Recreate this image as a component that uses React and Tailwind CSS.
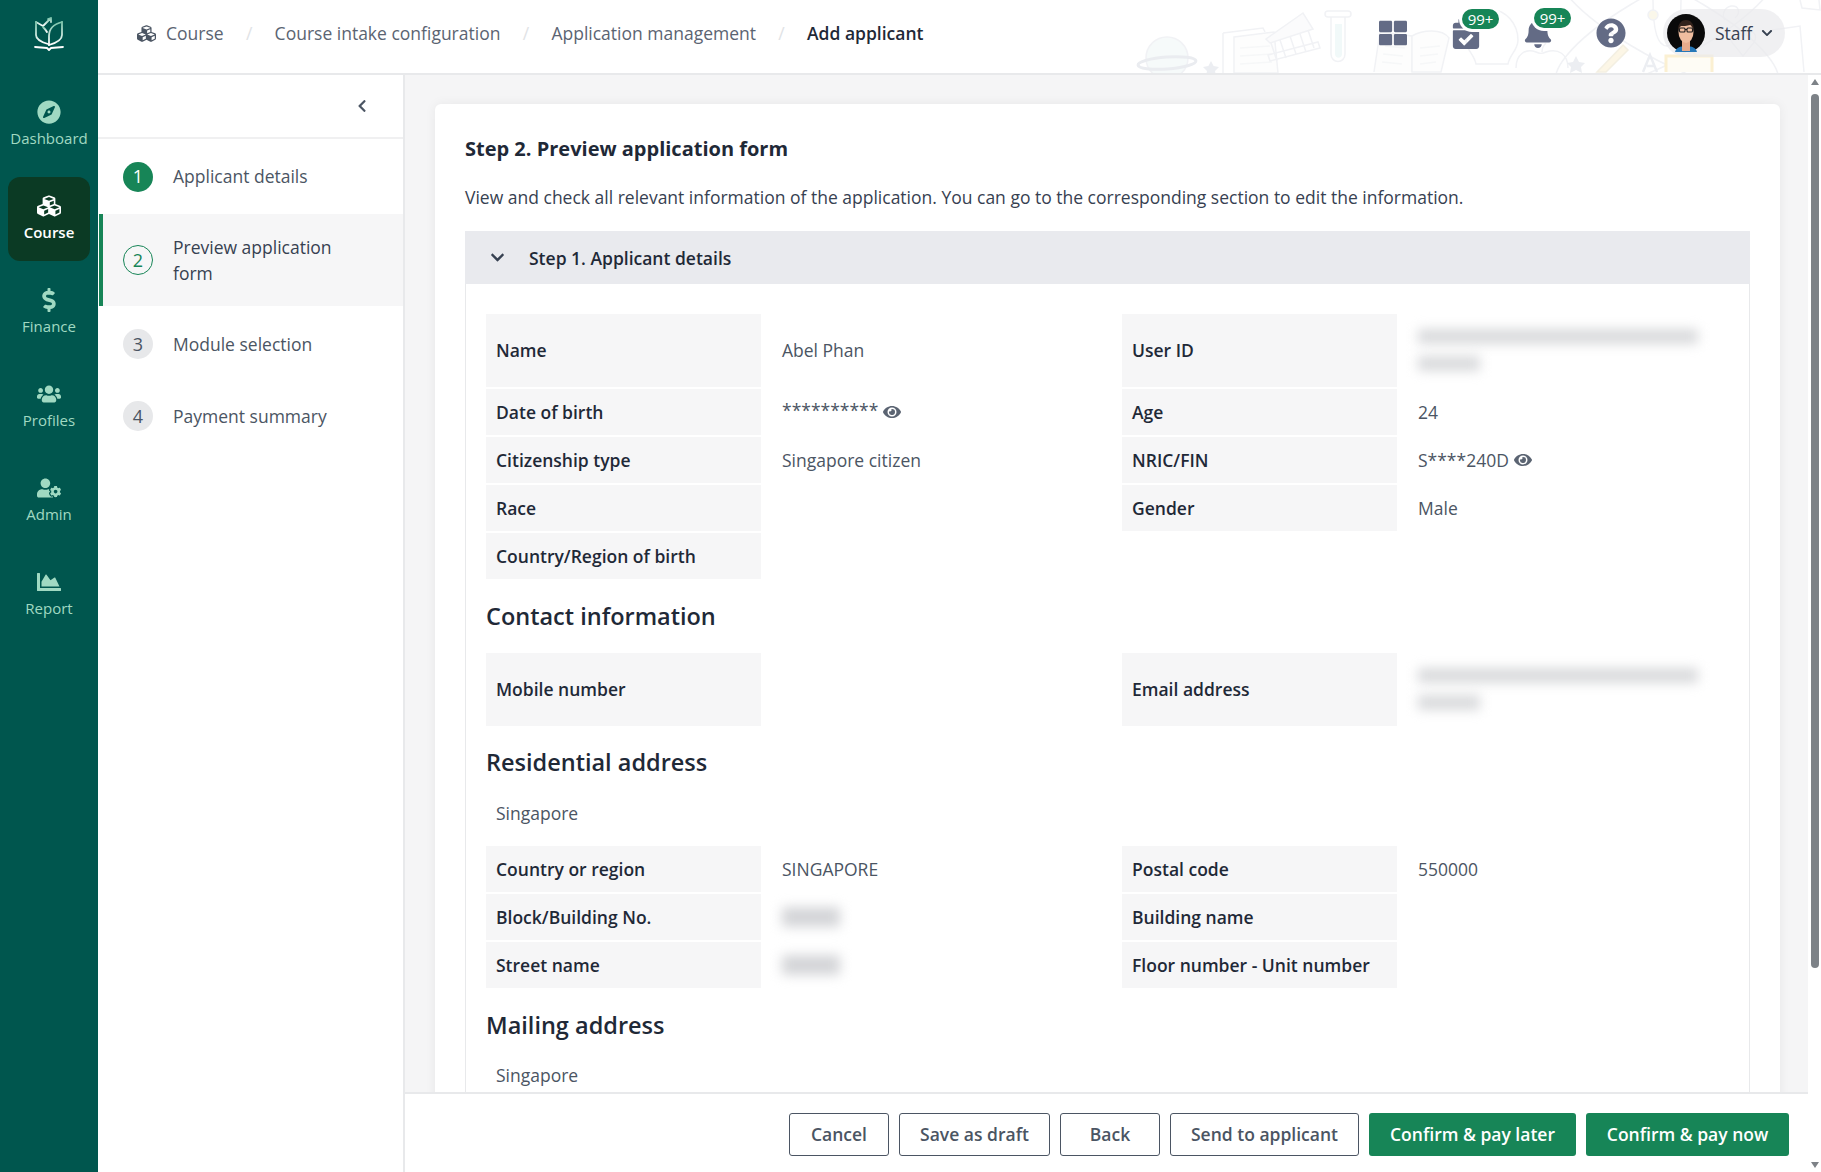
import React from "react";
import {
  FaCompass,
  FaCubes,
  FaDollarSign,
  FaUsers,
  FaUserCog,
  FaChartArea,
  FaThLarge,
  FaCalendarCheck,
  FaBell,
  FaQuestionCircle,
  FaEye,
  FaChevronDown,
  FaChevronLeft,
} from "react-icons/fa";

const navItems = [
  { label: "Dashboard", icon: FaCompass },
  { label: "Course", icon: FaCubes, active: true },
  { label: "Finance", icon: FaDollarSign },
  { label: "Profiles", icon: FaUsers },
  { label: "Admin", icon: FaUserCog },
  { label: "Report", icon: FaChartArea },
];

const Logo = () => (
  <svg width="30" height="36" viewBox="0 0 30 36" fill="none" strokeWidth="1.8" strokeLinejoin="round" strokeLinecap="round">
    <defs>
      <linearGradient id="logoFade" x1="0" y1="0" x2="0" y2="1">
        <stop offset="0" stopColor="#7cc4ab" />
        <stop offset="1" stopColor="#ffffff" />
      </linearGradient>
    </defs>
    <g stroke="url(#logoFade)">
      <path d="M2 7l7 4 8-8-3 1M17 3v4" />
      <path d="M2 7v13c0 4 5 7 12 9" />
      <path d="M28 7c-8 2-13 7-13 14v9" />
      <path d="M28 7v13c0 5-6 8-13 10" />
      <path d="M9 12c2 2 3 3 4 5" />
    </g>
    <path d="M1 32l12 1 2 2 2-2 12-1" stroke="#ffffff" />
  </svg>
);

const Avatar = () => (
  <svg width="38" height="38" viewBox="0 0 38 38">
    <circle cx="19" cy="19" r="19" fill="#0a0a0a" />
    <path d="M8 38c1-4 5-6 11-6s10 2 11 6a19 19 0 0 1-22 0z" fill="#2678b8" />
    <path d="M15 37l0-10h8l0 10z" fill="#e6ab8c" />
    <ellipse cx="19" cy="18" rx="7.500" ry="11" fill="#efbd9f" />
    <path d="M11 16c0-7 4-10 8-10s8 3 8 10c-2-3-3-5-4-5-3 1-7 1-9 1-1 1-2 2-3 4z" fill="#33231c" />
    <rect x="12.500" y="14" width="5.500" height="4" rx="1" fill="none" stroke="#1c1c1c" strokeWidth="1.100" />
    <rect x="20" y="14" width="5.500" height="4" rx="1" fill="none" stroke="#1c1c1c" strokeWidth="1.100" />
    <path d="M18 15.500h2" stroke="#1c1c1c" strokeWidth="1" />
  </svg>
);

// faint school doodles behind the header icons (drawn in page x minus 1100)
const Doodles = () => (
  <svg className="absolute right-0 top-0 pointer-events-none" width="721" height="73" viewBox="0 0 721 73" fill="none" strokeWidth="1.500">
    <g stroke="#f1f2f5">
      <circle cx="67" cy="58" r="21" fill="#f6fafa" />
      <path d="M123 33l40-5 2 4" fill="#fff" />
      <path d="M123 33v40M134 37l40-5 4 41h-44z" fill="#fdfdfd" />
      <path d="M140 48l30-2M140 56l32-2M140 64l32-2" stroke="#f6f7f8" />
      <path d="M203 13l-37 26 4 4 43-14z" fill="#fbfbfc" />
      <path d="M171 43l6 18M180 40l6 18M190 36l6 18M200 34l6 18M208 30l6 18" />
      <path d="M168 55l50-13 2 6-50 13z" />
      <path d="M228 11h20a2 2 0 0 1 0 6h-20a2 2 0 0 1 0-6zM231 17v37c0 10 14 10 14 0v-37" />
      <path d="M235 24h7v30c0 5-7 5-7 0z" fill="#f1f9f9" stroke="none" />
      <path d="M274 72l6-40 32 4v36" fill="#fdfdfd" />
      <path d="M312 36c10-6 30-8 37 2l-8 34h-29z" fill="#fdfdfd" />
      <path d="M320 48l20-2M320 56l18-2M320 64l16-2M285 46l20 2M283 54l20 2M282 62l20 2" stroke="#f6f7f8" />
      <path d="M366 40c0-16 12-30 26-30s26 14 26 30c0 10-8 14-10 24h-32c-2-10-10-14-10-24z" />
      <path d="M416 68c0-14 10-20 20-16 4 2 6 2 10 0 12-4 22 2 22 16" />
      <path d="M442 52c0-4 2-7 4-9" />
      <path d="M530 5a12 42 62 1 0 74 40a12 42 62 1 0-74-40zM604 5a12 42 -62 1 1-74 40a12 42 -62 1 1 74-40z" />
      <path d="M553 0c0 30 4 46 14 46s14-16 14-46" />
      <circle cx="553" cy="15" r="5" fill="#faf7ea" />
      <path d="M625 20c-3-4-2-12 6-14 8-1 10 7 4 12" />
      <path d="M635 46c-8-8-4-16 2-14 4 1 6 5 6 5s2-4 6-5c6-2 10 6 2 14l-8 10z" />
      <path d="M672 30l28-4 4 46M700 0l2 8 18 2-1-10" />
    </g>
    <path d="M111 61l2.600 5 5.400 1-4 4 1 5-5-3-5 3 1-5-4-4 5.400-1z" fill="#eceef2" />
    <ellipse cx="67" cy="63" rx="29" ry="6" stroke="#eaecf0" strokeWidth="3" transform="rotate(-4 67 63)" />
    <path d="M476 56l3 6 6 1-4 4 1 6-6-3-6 3 1-6-4-4 6-1z" fill="#eceef2" />
    <path d="M497 72l26-27 5 5-22 22z" fill="#fcf6e6" stroke="#f3efe2" />
    <path d="M543 72l7-17 7 17M547 66h7" stroke="#eceef2" strokeWidth="2.500" />
    <path d="M566 72v-16h46v16" stroke="#fbf0d2" strokeWidth="3" fill="#fefcf5" />
    <path d="M581 56l8-8 8 8" stroke="#fbf0d2" strokeWidth="2" />
  </svg>
);

const Sidebar = () => (
  <aside className="w-[98px] shrink-0 bg-[#00564e] flex flex-col items-center">
    <div className="h-[83px] pt-[15px] flex justify-center w-full">
      <Logo />
    </div>
    <nav className="flex flex-col gap-[10px] w-full px-2">
      {navItems.map((item) => {
        const Icon = item.icon;
        return (
          <div
            key={item.label}
            className={`h-[84px] rounded-xl flex flex-col items-center pt-[17px] ${
              item.active ? "bg-[#0b3a24] text-white font-semibold" : "text-[#a0d9c2]"
            }`}
          >
            <div className="h-6 flex items-center">
              <Icon className="w-6 h-6" />
            </div>
            <span className="mt-[3px] text-[15px] leading-[22px] whitespace-nowrap">{item.label}</span>
          </div>
        );
      })}
    </nav>
  </aside>
);

const Badge = () => (
  <span className="absolute left-[10px] top-[-10px] h-[20px] w-[37px] rounded-full bg-[#178557] ring-[3px] ring-white text-white text-[15px] leading-[20px] text-center">
    99+
  </span>
);

const Header = () => (
  <header className="relative h-[75px] shrink-0 bg-white border-b-2 border-[#e8e9eb] flex items-center pb-[7px]">
    <Doodles />
    <div className="relative flex items-center pl-[39px] text-[17.500px] text-[#5b6472]">
      <FaCubes className="w-[19px] h-[19px] mr-[10px] text-[#4b5563]" />
      <span>Course</span>
      <span className="w-[51px] text-center text-[#e1e3e6]">/</span>
      <span>Course intake configuration</span>
      <span className="w-[51px] text-center text-[#e1e3e6]">/</span>
      <span>Application management</span>
      <span className="w-[51px] text-center text-[#e1e3e6]">/</span>
      <span className="font-semibold text-[#1f2937]">Add applicant</span>
    </div>
    <div className="relative ml-auto flex items-center pr-[36px]">
      <FaThLarge className="w-[28px] h-[28px] text-[#636b85]" />
      <div className="relative ml-[45px] mt-[2px]">
        <FaCalendarCheck className="w-[28px] h-[30px] text-[#636b85]" />
        <Badge />
      </div>
      <div className="relative ml-[44px]">
        <FaBell className="w-[28px] h-[30px] text-[#636b85]" />
        <Badge />
      </div>
      <FaQuestionCircle className="ml-[44px] w-[30px] h-[30px] text-[#636b85]" />
      <div className="ml-[37px] w-[122px] h-[48px] rounded-full bg-[#e9eaec]/70 flex items-center pl-[4px]">
        <Avatar />
        <span className="ml-[10px] text-[17.500px] text-[#374151]">Staff</span>
        <FaChevronDown className="ml-[9px] w-3 h-3 text-[#374151]" />
      </div>
    </div>
  </header>
);

const StepList = () => (
  <div className="w-[307px] shrink-0 bg-white border-r-2 border-[#e8e9eb]">
    <div className="h-[64px] border-b-2 border-[#f0f0f1] flex items-center justify-end pr-[34px]">
      <FaChevronLeft className="w-[14px] h-[14px] text-[#4b5563]" />
    </div>
    <div className="h-[75px] flex items-center pl-[25px]">
      <span className="w-[30px] h-[30px] rounded-full bg-[#178557] text-white text-[18px] flex items-center justify-center">1</span>
      <span className="ml-[20px] text-[17.500px] text-[#4b5563]">Applicant details</span>
    </div>
    <div className="h-[92px] ml-px bg-[#f6f6f7] border-l-4 border-[#178557] flex items-center pl-[20px]">
      <span className="w-[30px] h-[30px] rounded-full border border-[#178557] text-[#178557] text-[18px] flex items-center justify-center">2</span>
      <span className="ml-[20px] w-[170px] text-[17.500px] leading-[26px] text-[#374151]">Preview application form</span>
    </div>
    <div className="h-[72px] mt-[2px] flex items-center pl-[25px]">
      <span className="w-[30px] h-[30px] rounded-full bg-[#e7e8ea] text-[#4b5563] text-[18px] flex items-center justify-center">3</span>
      <span className="ml-[20px] text-[17.500px] text-[#4b5563]">Module selection</span>
    </div>
    <div className="h-[72px] flex items-center pl-[25px]">
      <span className="w-[30px] h-[30px] rounded-full bg-[#e7e8ea] text-[#4b5563] text-[18px] flex items-center justify-center">4</span>
      <span className="ml-[20px] text-[17.500px] text-[#4b5563]">Payment summary</span>
    </div>
  </div>
);

const Label = ({ children, tall }) => (
  <div className={`${tall ? "h-[73px]" : "h-[46px]"} bg-[#f6f6f7] px-[10px] flex items-center text-[17.500px] font-semibold text-[#1f2937]`}>
    {children}
  </div>
);

const Value = ({ children }) => (
  <div className="pl-[21px] flex items-center text-[17.500px] text-[#4b5563]">{children}</div>
);

const BlurLong = () => (
  <div className="flex flex-col gap-[12px] mt-[-2px]">
    <div className="w-[280px] h-[15px] bg-[#d9dadc] blur-[6px]" />
    <div className="w-[62px] h-[15px] bg-[#d9dadc] blur-[6px]" />
  </div>
);

const BlurShort = () => <div className="w-[58px] h-[20px] bg-[#d4d5d8] blur-[6px]" />;

const Rows = ({ children }) => (
  <div className="grid grid-cols-[275px_361px_275px_1fr] gap-y-[2px]">{children}</div>
);

const Heading = ({ children, className }) => (
  <h3 className={`text-[23.500px] leading-[32px] font-semibold text-[#1f2937] ${className}`}>{children}</h3>
);

const Eye = () => <FaEye className="inline-block ml-[5px] w-[18px] h-[18px] text-[#5b6472]" />;

const Footer = () => {
  const outline = "h-[43px] rounded-[3px] border border-[#4b5563] bg-white text-[17.500px] font-semibold text-[#4b5563] flex items-center justify-center";
  const solid = "h-[43px] rounded-[3px] bg-[#178557] text-[17.500px] font-semibold text-white flex items-center justify-center";
  return (
    <div className="h-[80px] shrink-0 bg-white border-t-2 border-[#e8e9eb] flex items-center justify-end gap-[10px] pr-[19px] pt-[3px]">
      <button className={`${outline} w-[100px]`}>Cancel</button>
      <button className={`${outline} w-[151px]`}>Save as draft</button>
      <button className={`${outline} w-[100px]`}>Back</button>
      <button className={`${outline} w-[189px]`}>Send to applicant</button>
      <button className={`${solid} w-[207px]`}>Confirm &amp; pay later</button>
      <button className={`${solid} w-[203px]`}>Confirm &amp; pay now</button>
    </div>
  );
};

const Card = () => (
  <div className="bg-white rounded-md shadow-[0_0_12px_rgba(0,0,0,0.06)] px-[30px] pt-[30px] pb-10">
    <h2 className="text-[20px] leading-[30px] font-bold text-[#1f2937]">Step 2. Preview application form</h2>
    <p className="mt-[18px] text-[17.500px] leading-[30px] text-[#374151]">
      View and check all relevant information of the application. You can go to the corresponding section to edit the information.
    </p>
    <div className="mt-[19px]">
      <div className="h-[53px] bg-[#e9eaee] flex items-center pl-[25px]">
        <FaChevronDown className="w-[15px] h-[15px] text-[#374151]" />
        <span className="ml-[24px] pt-[2px] text-[17.500px] font-semibold text-[#1f2937]">Step 1. Applicant details</span>
      </div>
      <div className="border-x border-[#e8e9eb] pl-5 pr-5 pt-[30px] pb-10">
        <Rows>
          <Label tall>Name</Label>
          <Value>Abel Phan</Value>
          <Label tall>User ID</Label>
          <Value><BlurLong /></Value>

          <Label>Date of birth</Label>
          <Value><span className="mt-[-4px]">**********</span><Eye /></Value>
          <Label>Age</Label>
          <Value>24</Value>

          <Label>Citizenship type</Label>
          <Value>Singapore citizen</Value>
          <Label>NRIC/FIN</Label>
          <Value>S****240D<Eye /></Value>

          <Label>Race</Label>
          <Value />
          <Label>Gender</Label>
          <Value>Male</Value>

          <Label>Country/Region of birth</Label>
          <Value />
          <div />
          <div />
        </Rows>

        <Heading className="mt-[21px]">Contact information</Heading>
        <div className="mt-[21px]">
          <Rows>
            <Label tall>Mobile number</Label>
            <Value />
            <Label tall>Email address</Label>
            <Value><BlurLong /></Value>
          </Rows>
        </div>

        <Heading className="mt-[20px]">Residential address</Heading>
        <p className="mt-[20px] pl-[10px] text-[17.500px] leading-[30px] text-[#4b5563]">Singapore</p>
        <div className="mt-[18px]">
          <Rows>
            <Label>Country or region</Label>
            <Value>SINGAPORE</Value>
            <Label>Postal code</Label>
            <Value>550000</Value>

            <Label>Block/Building No.</Label>
            <Value><BlurShort /></Value>
            <Label>Building name</Label>
            <Value />

            <Label>Street name</Label>
            <Value><BlurShort /></Value>
            <Label>Floor number - Unit number</Label>
            <Value />
          </Rows>
        </div>

        <Heading className="mt-[21px]">Mailing address</Heading>
        <p className="mt-[19px] pl-[10px] text-[17.500px] leading-[30px] text-[#4b5563]">Singapore</p>
      </div>
    </div>
  </div>
);

const ScrollBar = () => (
  <div className="w-[13px] shrink-0 bg-white flex flex-col items-center">
    <div className="h-[14px] pt-[4px] flex justify-center">
      <div className="w-0 h-0 border-x-[4px] border-x-transparent border-b-[6px] border-b-[#7d8287]" />
    </div>
    <div className="w-[8px] h-[874px] mt-[5px] rounded-full bg-[#7d8287]" />
    <div className="mt-auto h-[14px] pb-[4px] flex justify-center items-end">
      <div className="w-0 h-0 border-x-[4px] border-x-transparent border-t-[6px] border-t-[#7d8287]" />
    </div>
  </div>
);

export default function App() {
  return (
    <div className="h-screen flex overflow-hidden bg-white font-['Open_Sans',sans-serif]">
      <Sidebar />
      <div className="flex-1 min-w-0 flex flex-col">
        <Header />
        <div className="flex-1 min-h-0 flex">
          <StepList />
          <main className="flex-1 min-w-0 flex flex-col">
            <div className="flex-1 min-h-0 overflow-hidden bg-[#f5f5f6] pl-[30px] pr-[28px] pt-[29px]">
              <Card />
            </div>
            <Footer />
          </main>
          <ScrollBar />
        </div>
      </div>
    </div>
  );
}
